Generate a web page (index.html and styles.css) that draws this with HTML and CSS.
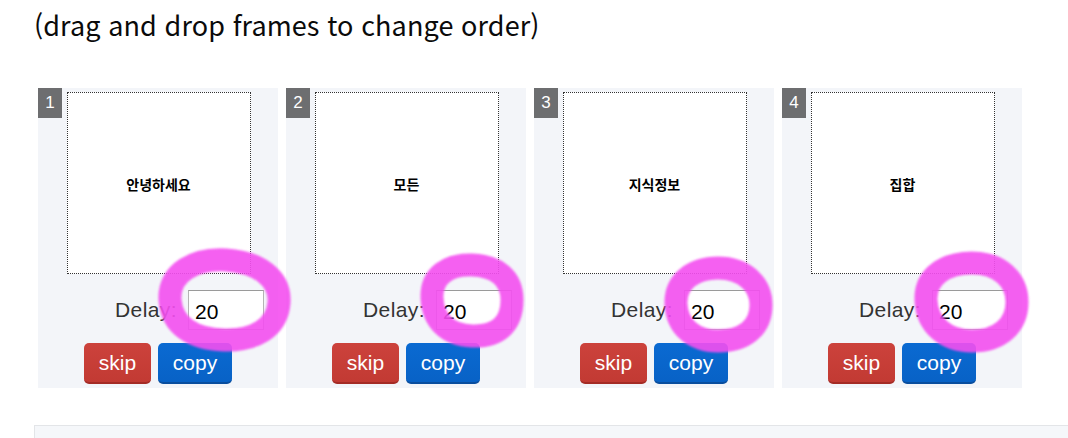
FILE: index.html
```html
<!DOCTYPE html>
<html lang="ko">
<head>
<meta charset="utf-8">
<title>Frames</title>
<link rel="stylesheet" href="styles.css">
</head>
<body>
<div class="page">
  <p class="hint">(drag and drop frames to change order)</p>
  <div class="frames">
    <div class="card">
      <span class="badge">1</span>
      <div class="frame"><span class="frame-text">안녕하세요</span></div>
      <div class="delay"><label class="delay-label">Delay:</label><input class="delay-input" type="text" value="20"></div>
      <div class="actions"><button class="btn btn-skip">skip</button><button class="btn btn-copy">copy</button></div>
    </div>
    <div class="card">
      <span class="badge">2</span>
      <div class="frame"><span class="frame-text">모든</span></div>
      <div class="delay"><label class="delay-label">Delay:</label><input class="delay-input" type="text" value="20"></div>
      <div class="actions"><button class="btn btn-skip">skip</button><button class="btn btn-copy">copy</button></div>
    </div>
    <div class="card">
      <span class="badge">3</span>
      <div class="frame"><span class="frame-text">지식정보</span></div>
      <div class="delay"><label class="delay-label">Delay:</label><input class="delay-input" type="text" value="20"></div>
      <div class="actions"><button class="btn btn-skip">skip</button><button class="btn btn-copy">copy</button></div>
    </div>
    <div class="card">
      <span class="badge">4</span>
      <div class="frame"><span class="frame-text">집합</span></div>
      <div class="delay"><label class="delay-label">Delay:</label><input class="delay-input" type="text" value="20"></div>
      <div class="actions"><button class="btn btn-skip">skip</button><button class="btn btn-copy">copy</button></div>
    </div>
  </div>
  <div class="panel"></div>
</div>
<svg class="marks" width="1068" height="438" viewBox="0 0 1068 438" aria-hidden="true">
  <g class="marks-g">
    <path d="M170 300 C168 272 196 258 226 260 C258 262 281 278 279 303 C277 328 254 341 224 340 C192 339 172 325 170 300 Z"/>
    <path d="M432 298 C431 276 448 264 472 265 C497 266 512 278 512 300 C512 324 498 337 472 336 C447 335 433 320 432 298 Z"/>
    <path d="M676 304 C675 281 694 268 718 268 C744 268 761 284 761 305 C761 328 744 341 718 341 C694 341 677 327 676 304 Z"/>
    <path d="M926 300 C925 276 946 263 972 263 C1000 263 1017 280 1017 302 C1017 326 999 341 972 341 C946 341 927 325 926 300 Z"/>
  </g>
</svg>
</body>
</html>
```
FILE: styles.css
```css
html, body {
  margin: 0;
  padding: 0;
  background: #ffffff;
}
body {
  font-family: "Liberation Sans", Arial, sans-serif;
  color: #333333;
  overflow: hidden;
  width: 1068px;
  height: 438px;
}
.page {
  padding: 6px 0 0 34px;
}
.hint {
  margin: 0;
  font-family: "Noto Sans CJK KR", "Noto Sans", sans-serif;
  font-size: 27px;
  line-height: 38px;
  color: #0a0a0a;
  letter-spacing: 0.1px;
}
.frames {
  display: flex;
  margin-top: 40px;
}
.card {
  position: relative;
  width: 240px;
  height: 300px;
  margin: 4px;
  padding: 4px 0;
  box-sizing: border-box;
  background: #f3f5f9;
  display: flex;
  flex-direction: column;
  align-items: center;
}
.badge {
  position: absolute;
  left: 0;
  top: 0;
  width: 24px;
  height: 30px;
  background: #6d6e70;
  color: #ffffff;
  font-size: 17px;
  line-height: 30px;
  text-align: center;
}
.frame {
  width: 182px;
  height: 180px;
  margin-left: 1px;
  border: 1px dotted #333333;
  background: #ffffff;
  display: flex;
  align-items: center;
  justify-content: center;
}
.frame-text {
  font-family: "Noto Sans CJK KR", sans-serif;
  font-weight: 700;
  font-size: 14px;
  color: #000000;
  margin-top: 2px;
}
.delay {
  align-self: stretch;
  display: flex;
  align-items: center;
  gap: 8px;
  padding-left: 77px;
  margin-top: 16px;
  height: 40px;
}
.delay-label {
  font-size: 21px;
  color: #333333;
  width: 65px;
  letter-spacing: 0.4px;
}
.delay-input {
  width: 76px;
  height: 40px;
  box-sizing: border-box;
  border: 1px solid #b4b4b4;
  border-top-color: #9a9a9a;
  padding: 4px 6px 0;
  font-family: "Liberation Sans", Arial, sans-serif;
  font-size: 21px;
  color: #000000;
  background: #ffffff;
  margin: 0;
}
.actions {
  display: flex;
  gap: 7px;
  margin-top: 13px;
}
.btn {
  height: 41px;
  border: 0;
  border-radius: 5px;
  color: #ffffff;
  font-family: "Liberation Sans", Arial, sans-serif;
  font-size: 21px;
  padding: 0;
  margin: 0;
}
.btn-skip {
  width: 67px;
  background: linear-gradient(#cc423c, #c23a33);
  border-bottom: 2px solid #a42c26;
}
.btn-copy {
  width: 74px;
  background: linear-gradient(#0a6ad2, #0862c6);
  border-bottom: 2px solid #0a4e9e;
}
.panel {
  margin-top: 33px;
  height: 12px;
  background: #f5f7fa;
  border: 1px solid #e3e5e8;
  border-right: 0;
  border-bottom: 0;
}
.marks {
  position: absolute;
  left: 0;
  top: 0;
  pointer-events: none;
}
.marks-g path {
  fill: none;
  stroke: #f44ff0;
  stroke-width: 23;
  stroke-linejoin: round;
  opacity: 0.9;
  filter: blur(0.8px);
}
```
